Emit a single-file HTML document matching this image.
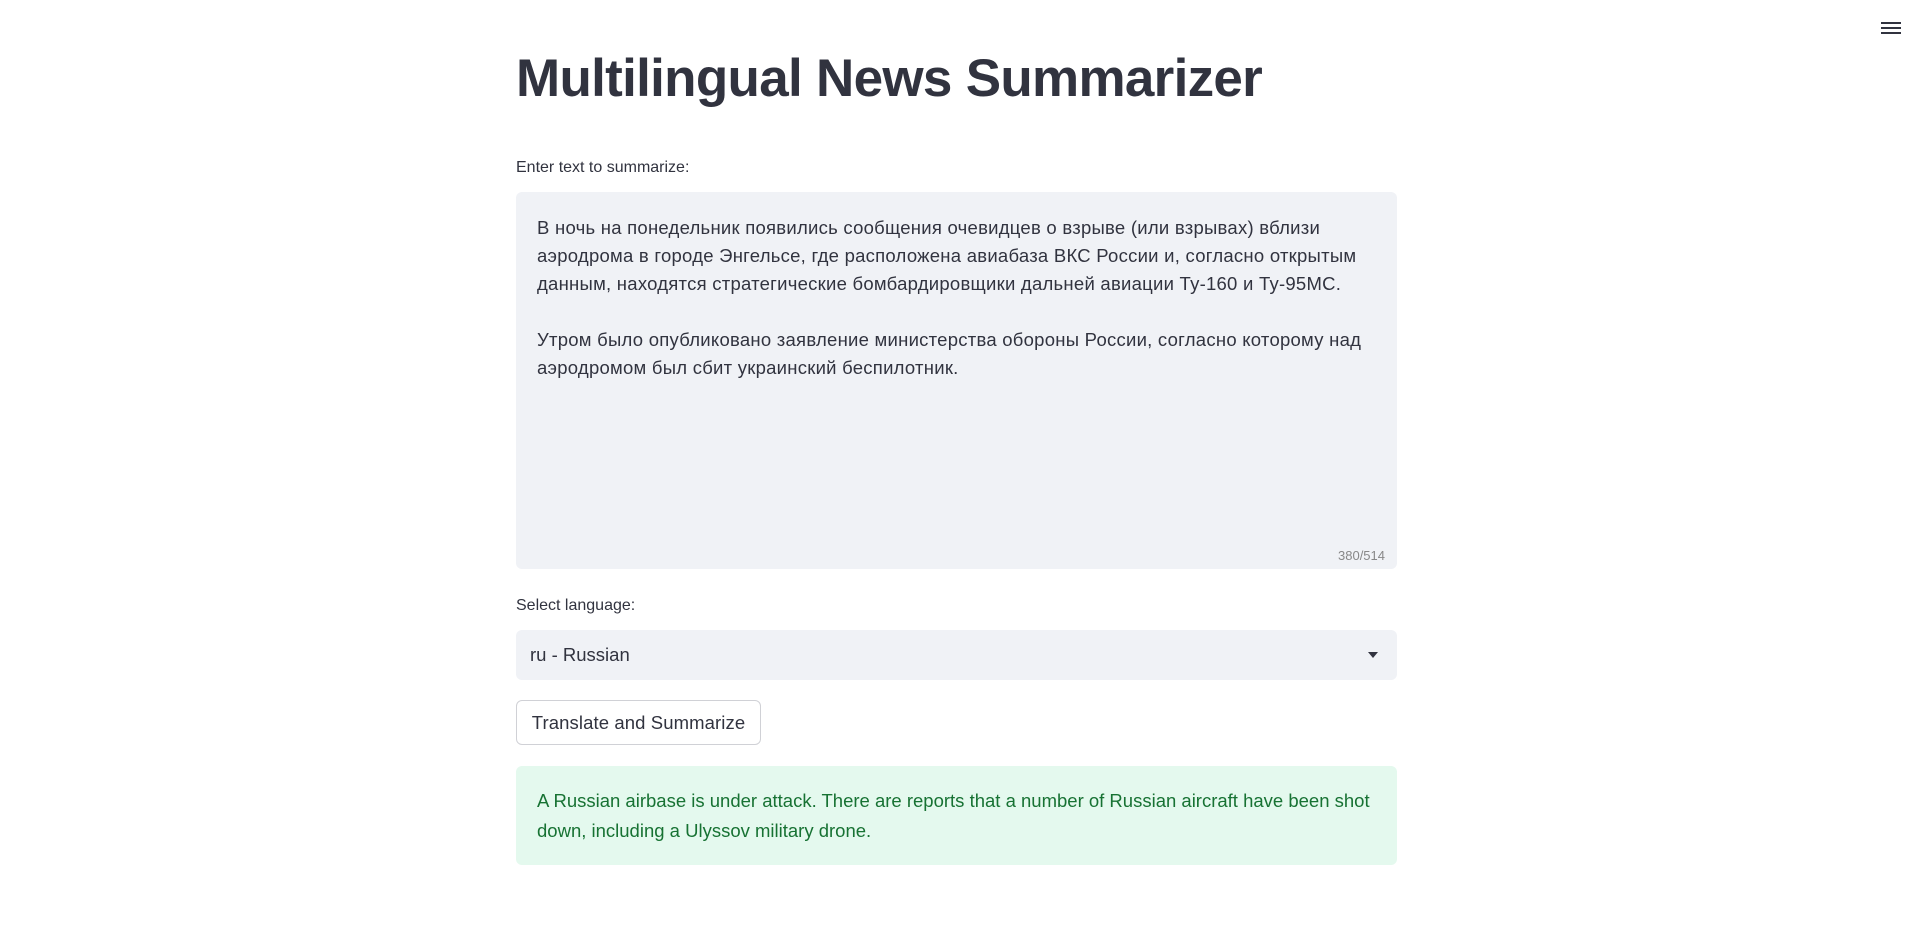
<!DOCTYPE html>
<html><head><meta charset="utf-8"><style>
body{margin:0;width:1919px;height:949px;background:#fff;font-family:"Liberation Sans",sans-serif;color:#31333f;position:relative;overflow:hidden}
.a{position:absolute;white-space:nowrap}
h1{position:absolute;left:516px;top:48px;margin:0;font-size:53px;font-weight:700;letter-spacing:-0.7px;color:#31333f}
.lbl{font-size:16px;letter-spacing:0}
.ta{position:absolute;left:516px;top:192px;width:881px;height:377px;background:#f0f2f6;border-radius:6px}
.ta div{position:absolute;left:21px;font-size:18.5px;letter-spacing:0.25px;white-space:nowrap}
.sel{position:absolute;left:516px;top:630px;width:881px;height:50px;background:#f0f2f6;border-radius:6px}
.btn{position:absolute;left:516px;top:700px;width:243px;height:43px;border:1px solid #d0d1d6;border-radius:6px;font-size:18.5px;letter-spacing:0.1px;line-height:43px;text-align:center}
.ok{position:absolute;left:516px;top:766px;width:881px;height:99px;background:#e4f9ee;border-radius:6px;color:#177233}
.ok div{position:absolute;left:21px;font-size:18.5px;letter-spacing:0;white-space:nowrap}
</style></head><body>
<svg class="a" style="left:1881px;top:20px" width="20" height="16"><rect x="0" y="2" width="20" height="2" fill="#31333f"/><rect x="0" y="7" width="20" height="2" fill="#31333f"/><rect x="0" y="12" width="20" height="2" fill="#31333f"/></svg>
<h1>Multilingual News Summarizer</h1>
<div class="a lbl" style="left:516px;top:159px">Enter text to summarize:</div>
<div class="ta">
<div style="top:25px">В ночь на понедельник появились сообщения очевидцев о взрыве (или взрывах) вблизи</div>
<div style="top:53px">аэродрома в городе Энгельсе, где расположена авиабаза ВКС России и, согласно открытым</div>
<div style="top:81px">данным, находятся стратегические бомбардировщики дальней авиации Ту-160 и Ту-95МС.</div>
<div style="top:137px">Утром было опубликовано заявление министерства обороны России, согласно которому над</div>
<div style="top:165px">аэродромом был сбит украинский беспилотник.</div>
<div style="left:822px;top:356px;font-size:13px;letter-spacing:0;color:#888">380/514</div>
</div>
<div class="a lbl" style="left:516px;top:597px">Select language:</div>
<div class="sel"><div class="a" style="left:14px;top:14px;font-size:18.5px;letter-spacing:0">ru - Russian</div>
<svg class="a" style="left:852px;top:22px" width="10" height="6"><path d="M0 0L10 0L5 6Z" fill="#31333f"/></svg></div>
<div class="btn">Translate and Summarize</div>
<div class="ok">
<div style="top:24px">A Russian airbase is under attack. There are reports that a number of Russian aircraft have been shot</div>
<div style="top:54px">down, including a Ulyssov military drone.</div>
</div>
</body></html>
